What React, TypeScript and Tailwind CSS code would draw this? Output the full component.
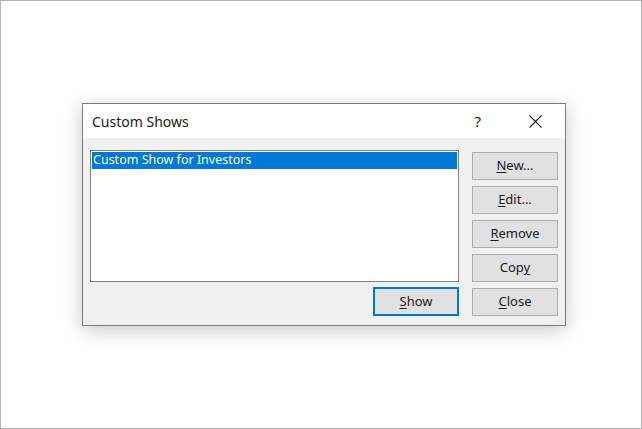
import React from 'react';

type BtnProps = {
  label: string;
  hot: number;
  focused?: boolean;
};

// Underlines the access-key letter of a button label
const Mnemonic: React.FC<{ label: string; hot: number }> = ({ label, hot }) => (
  <span>
    {label.slice(0, hot)}
    <span className="underline underline-offset-2">{label[hot]}</span>
    {label.slice(hot + 1)}
  </span>
);

const DialogButton: React.FC<BtnProps> = ({ label, hot, focused }) => (
  <button
    className={
      focused
        ? 'flex h-[29px] w-[86px] items-center justify-center border-2 border-[#0078d7] bg-[#e1e1e1] text-[13px] text-[#1a1a1a]'
        : 'flex h-[28px] w-[86px] items-center justify-center border border-[#adadad] bg-[#e1e1e1] text-[13px] text-[#1a1a1a]'
    }
  >
    <Mnemonic label={label} hot={hot} />
  </button>
);

export default function App() {
  const shows = ['Custom Show for Investors'];

  return (
    <div
      className="h-[429px] w-[642px] border border-[#b4b4b4] bg-white pl-[81px] pt-[102px]"
      style={{ fontFamily: '"Noto Sans", "Open Sans", sans-serif' }}
    >
      <div className="flex h-[223px] w-[484px] flex-col border border-[#7a7a7a] bg-[#f0f0f0] shadow-[0_4px_18px_rgba(0,0,0,0.22)]">
        {/* title bar */}
        <div className="flex h-[34px] items-center bg-white pl-[9px]">
          <span className="text-[14px] text-[#1a1a1a]">Custom Shows</span>
          <span className="ml-auto mr-[48px] text-[15px] text-[#1a1a1a]">?</span>
          <svg width="13" height="13" viewBox="0 0 13 13" className="mr-[23px]">
            <path d="M0.5 0.5 L12.5 12.5 M12.5 0.5 L0.5 12.5" stroke="#1a1a1a" strokeWidth="1.1" />
          </svg>
        </div>

        {/* body */}
        <div className="flex gap-[13px] pl-[7px] pt-[12px]">
          <div className="flex flex-col">
            <div className="h-[132px] w-[369px] border border-[#828282] bg-white p-[1px]">
              {shows.map((s) => (
                <div
                  key={s}
                  className="flex h-[17px] items-center bg-[#0078d7] pl-[1px] text-[12.5px] text-white"
                >
                  {s}
                </div>
              ))}
            </div>
            <div className="mt-[5px] flex justify-end">
              <DialogButton label="Show" hot={0} focused />
            </div>
          </div>

          <div className="flex flex-col gap-[6px] pt-[2px]">
            <DialogButton label="New..." hot={0} />
            <DialogButton label="Edit..." hot={0} />
            <DialogButton label="Remove" hot={0} />
            <DialogButton label="Copy" hot={3} />
            <DialogButton label="Close" hot={0} />
          </div>
        </div>
      </div>
    </div>
  );
}
